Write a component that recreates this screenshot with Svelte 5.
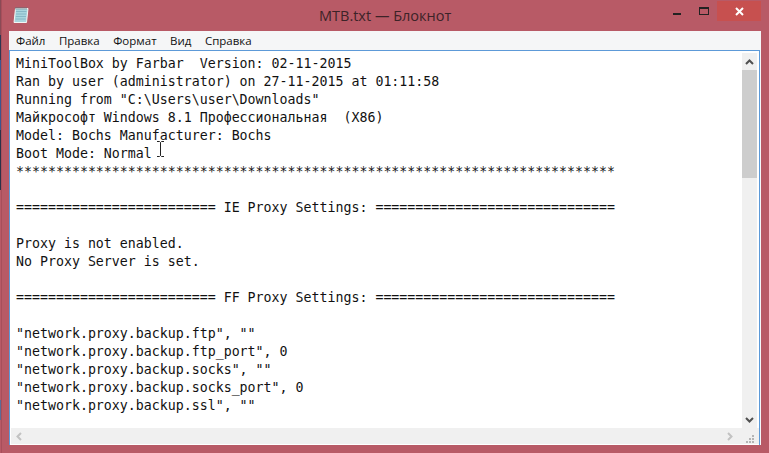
<script>
    const lines = [
        'MiniToolBox by Farbar  Version: 02-11-2015',
        'Ran by user (administrator) on 27-11-2015 at 01:11:58',
        'Running from "C:\\Users\\user\\Downloads"',
        'Майкрософт Windows 8.1 Профессиональная  (X86)',
        'Model: Bochs Manufacturer: Bochs',
        'Boot Mode: Normal',
        '*'.repeat(75),
        '',
        '========================= IE Proxy Settings: ==============================',
        '',
        'Proxy is not enabled.',
        'No Proxy Server is set.',
        '',
        '========================= FF Proxy Settings: ==============================',
        '',
        '"network.proxy.backup.ftp", ""',
        '"network.proxy.backup.ftp_port", 0',
        '"network.proxy.backup.socks", ""',
        '"network.proxy.backup.socks_port", 0',
        '"network.proxy.backup.ssl", ""'
    ];
    const menu = ['Файл', 'Правка', 'Формат', 'Вид', 'Справка'];
</script>

<div class="desktop">
    <div class="window">
        <header class="titlebar">
            <svg class="app-icon" width="16" height="18" viewBox="0 0 16 18">
                <path d="M2.5 2.5 L15 2.5 L13.5 16.5 L1 16.5 Z" fill="#a9d6de" stroke="#f2f6f4" stroke-width="1"/>
                <path d="M3 5.5 H13.5 M3 8 H13.2 M2.8 10.5 H13 M2.6 13 H12.8" stroke="#7fb0c0" stroke-width="0.8"/>
                <path d="M3 1 V3.5 M5 1 V3.5 M7 1 V3.5 M9 1 V3.5 M11 1 V3.5 M13 1 V3.5" stroke="#5d6f78" stroke-width="0.9"/>
            </svg>
            <span class="title">MTB.txt — Блокнот</span>
            <div class="controls">
                <span class="ctl min"><i></i></span>
                <span class="ctl max"><i></i></span>
                <span class="ctl close">
                    <svg width="9" height="9" viewBox="0 0 9 9">
                        <path d="M1 1 L8 8 M8 1 L1 8" stroke="#fff" stroke-width="2"/>
                    </svg>
                </span>
            </div>
        </header>

        <div class="client">
            <nav class="menubar">
                {#each menu as item}
                    <span>{item}</span>
                {/each}
            </nav>

            <div class="editor">
                <div class="upper">
                    <pre class="text">{lines.join('\n')}</pre>
                    <div class="vscroll">
                        <div class="arrow-btn">
                            <svg width="9" height="6" viewBox="0 0 9 6">
                                <path d="M1 5 L4.5 1.5 L8 5" fill="none" stroke="#505050" stroke-width="2"/>
                            </svg>
                        </div>
                        <div class="thumb"></div>
                        <div class="track"></div>
                        <div class="arrow-btn">
                            <svg width="9" height="6" viewBox="0 0 9 6">
                                <path d="M1 1 L4.5 4.5 L8 1" fill="none" stroke="#505050" stroke-width="2"/>
                            </svg>
                        </div>
                    </div>
                </div>
                <div class="hscroll">
                    <svg width="6" height="9" viewBox="0 0 6 9">
                        <path d="M5 1 L1.5 4.5 L5 8" fill="none" stroke="#c2c2c2" stroke-width="2"/>
                    </svg>
                    <svg width="6" height="9" viewBox="0 0 6 9">
                        <path d="M1 1 L4.5 4.5 L1 8" fill="none" stroke="#c2c2c2" stroke-width="2"/>
                    </svg>
                    <svg class="grip" width="9" height="9" viewBox="0 0 9 9">
                        <path d="M6 0h2v2h-2z M3 3h2v2h-2z M6 3h2v2h-2z M0 6h2v2h-2z M3 6h2v2h-2z M6 6h2v2h-2z" fill="#b4b4b4"/>
                    </svg>
                </div>
            </div>
        </div>

        <!-- I-beam mouse pointer -->
        <svg class="cursor" width="9" height="16" viewBox="0 0 9 16">
            <path d="M1 0.5 H3.5 L4.5 1.5 L5.5 0.5 H8 M4.5 1.5 V14.5 M1 15.5 H3.5 L4.5 14.5 L5.5 15.5 H8" fill="none" stroke="#222" stroke-width="1"/>
        </svg>
    </div>
</div>

<style>
    :global(body) {
        margin: 0;
        background: #b85a66;
    }

    .desktop {
        height: 453px;
        width: 769px;
        overflow: hidden;
        background: linear-gradient(#8a4a55 0 35px, #2d3650 35px 60px, #3a5590 60px 130px, #2a3248 130px 190px, #b85a66 190px 400px, #5a6c98 400px 420px, #b85a66 420px);
        padding-left: 1px;
        box-sizing: border-box;
    }

    .window {
        position: relative;
        height: 100%;
        display: flex;
        flex-direction: column;
        background: #b85a66;
        border-left: 1px solid #a84f5b;
        padding: 0 8px 8px 7px;
        box-sizing: border-box;
    }

    .titlebar {
        height: 31px;
        flex-shrink: 0;
        display: flex;
        align-items: center;
        position: relative;
    }

    .app-icon {
        margin: 0 0 1px 4px;
    }

    .title {
        position: absolute;
        left: 310px;
        top: 5px;
        font-family: "Open Sans", "Noto Sans", sans-serif;
        font-size: 14.5px;
        line-height: 21px;
        color: #3c2328;
        white-space: nowrap;
    }

    .controls {
        margin-left: auto;
        display: flex;
        align-self: flex-start;
    }

    .ctl {
        height: 20px;
        display: flex;
        align-items: center;
        justify-content: center;
        margin-top: 1px;
    }

    .min {
        width: 8px;
        margin-right: 18px;
    }
    .min i {
        width: 8px;
        height: 2px;
        background: #222;
        margin-top: 6px;
    }

    .max {
        width: 10px;
        margin-right: 8px;
    }
    .max i {
        width: 8px;
        height: 5px;
        border: 1px solid #222;
        border-top-width: 2px;
    }

    .close {
        width: 44px;
        background: #c7504f;
    }

    .client {
        flex: 1;
        min-height: 0;
        display: flex;
        flex-direction: column;
        background: #f5f6f7;
        border-right: 1px solid #f5f6f7;
    }

    .menubar {
        height: 19px;
        flex-shrink: 0;
        display: flex;
        gap: 13.5px;
        padding-left: 7px;
        font-family: "Open Sans", "Noto Sans", sans-serif;
        font-size: 11.5px;
        line-height: 19px;
        color: #111;
    }

    .editor {
        flex: 1;
        min-height: 0;
        display: flex;
        flex-direction: column;
        background: #fff;
        border: 1px solid #5d9ad8;
        border-bottom: 0;
    }

    .upper {
        flex: 1;
        min-height: 0;
        display: flex;
    }

    .text {
        flex: 1;
        margin: 0;
        padding: 4px 0 0 6px;
        overflow: hidden;
        font-family: "DejaVu Sans Mono", monospace;
        font-size: 13.28px;
        line-height: 18px;
        color: #111;
    }

    .vscroll {
        width: 15px;
        margin: 2px 2px 0 0;
        display: flex;
        flex-direction: column;
        background: #f0f0f0;
    }

    .arrow-btn {
        height: 17px;
        flex-shrink: 0;
        display: flex;
        align-items: center;
        justify-content: center;
    }

    .thumb {
        height: 108px;
        flex-shrink: 0;
        background: #cdcdcd;
    }

    .track {
        flex: 1;
    }

    .hscroll {
        height: 16px;
        flex-shrink: 0;
        display: flex;
        align-items: center;
        background: #f0f0f0;
        margin: 0 0 1px 1px;
        padding: 0 4px 0 5px;
    }

    .hscroll svg:nth-child(2) {
        margin-left: auto;
        margin-right: 13px;
    }

    .grip {
        margin-top: 6px;
    }

    .cursor {
        position: absolute;
        left: 154px;
        top: 141px;
    }
</style>
